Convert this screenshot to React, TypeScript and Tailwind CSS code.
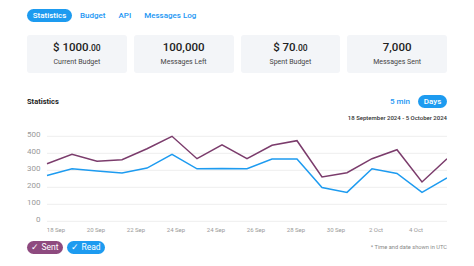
import React from 'react';

const tabs = ['Statistics', 'Budget', 'API', 'Messages Log'];

interface Stat {
  value: string;
  cents?: string;
  label: string;
}

const stats: Stat[] = [
  { value: '$ 1000', cents: '.00', label: 'Current Budget' },
  { value: '100,000', label: 'Messages Left' },
  { value: '$ 70', cents: '.00', label: 'Spent Budget' },
  { value: '7,000', label: 'Messages Sent' },
];

const sent = [339, 394, 353, 362, 427, 500, 368, 450, 368, 447, 474, 261, 286, 368, 421, 231, 368];
const read = [270, 309, 296, 284, 313, 394, 309, 311, 309, 366, 366, 198, 170, 309, 282, 170, 255];
const xLabels = ['18 Sep', '20 Sep', '22 Sep', '24 Sep', '24 Sep', '26 Sep', '28 Sep', '30 Sep', '2 Oct', '4 Oct'];

const yOf = (v: number) => 95.3 - v * 0.17;
const toPoints = (data: number[]) => data.map((v, i) => `${20 + 25 * i},${yOf(v).toFixed(1)}`).join(' ');

function Chart() {
  return (
    <svg width="420" height="110" viewBox="0 0 420 110" className="block">
      {[0, 100, 200, 300, 400, 500].map((v) => (
        <g key={v}>
          <line x1="20" x2="420" y1={yOf(v)} y2={yOf(v)} stroke="#eeeeee" strokeWidth="1" />
          <text x="13.5" y={yOf(v) + 0.5} textAnchor="end" fontSize="8" fill="#9a9a9a" fontFamily="Roboto, sans-serif">
            {v}
          </text>
        </g>
      ))}
      {xLabels.map((l, i) => (
        <text key={i} x={29 + 40 * i} y="105.5" textAnchor="middle" fontSize="6" fill="#9a9a9a" fontFamily="Roboto, sans-serif">
          {l}
        </text>
      ))}
      <polyline points={toPoints(sent)} fill="none" stroke="#7b3c6c" strokeWidth="1.5" />
      <polyline points={toPoints(read)} fill="none" stroke="#1d9bf0" strokeWidth="1.5" />
    </svg>
  );
}

export default function App() {
  return (
    <div className="w-[474px] h-[266px] bg-white overflow-hidden px-[27px] font-['Roboto',sans-serif]">
      <div className="flex items-center mt-[9px] h-[13px] text-[8px] font-medium">
        {tabs.map((t, i) => (
          <span
            key={t}
            className={
              i === 0
                ? 'bg-[#1d9bf0] text-white rounded-full h-[13px] w-[45px] flex items-center justify-center mr-[8px]'
                : 'text-[#2196f3] mr-[13px]'
            }
          >
            {t}
          </span>
        ))}
      </div>

      <div className="grid grid-cols-4 gap-[7px] mt-[13px]">
        {stats.map((s) => (
          <div key={s.label} className="bg-[#f3f5f8] rounded-[3px] h-[38px] flex flex-col items-center justify-center">
            <div className="text-[11.5px] font-medium text-[#222] leading-none">
              {s.value}
              {s.cents && <span className="text-[8.5px]">{s.cents}</span>}
            </div>
            <div className="text-[7px] text-[#444] mt-[5px] leading-none">{s.label}</div>
          </div>
        ))}
      </div>

      <div className="flex items-center justify-between mt-[22px] h-[13px]">
        <span className="text-[7.5px] font-bold text-[#222]">Statistics</span>
        <div className="flex items-center text-[8px] font-medium">
          <span className="text-[#2196f3] mr-[8px]">5 min</span>
          <span className="bg-[#1d9bf0] text-white rounded-full h-[13px] w-[29px] flex items-center justify-center">Days</span>
        </div>
      </div>
      <div className="text-right text-[6px] font-medium text-[#333] mt-[7px] leading-none">
        18 September 2024 - 5 October 2024
      </div>

      <div className="mt-[5px]">
        <Chart />
      </div>

      <div className="flex items-center justify-between mt-[5px]">
        <div className="flex items-center gap-[4px] text-[8.5px] text-white">
          <span className="bg-[#8e4a7f] rounded-full h-[13px] w-[36px] flex items-center justify-center">✓ Sent</span>
          <span className="bg-[#1d9bf0] rounded-full h-[13px] w-[38px] flex items-center justify-center">✓ Read</span>
        </div>
        <span className="text-[5.7px] text-[#888]">* Time and date shown in UTC</span>
      </div>
    </div>
  );
}
